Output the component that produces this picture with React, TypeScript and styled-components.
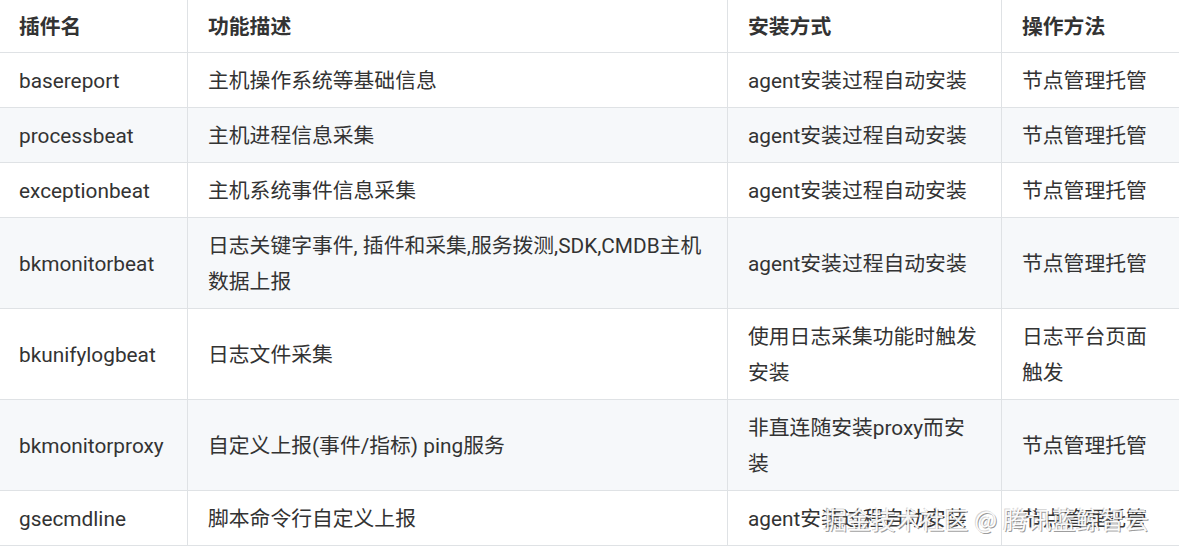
import React from "react";
import styled, { createGlobalStyle } from "styled-components";

const Global = createGlobalStyle`
  html, body { margin: 0; padding: 0; background: #ffffff; }
  body {
    width: 1179px;
    height: 546px;
    overflow: hidden;
    font-family: Roboto, "Noto Sans CJK SC", sans-serif;
    color: #333333;
  }
`;

const Page = styled.div`
  position: relative;
  width: 1179px;
  height: 546px;
  overflow: hidden;
`;

const Table = styled.div`
  display: flex;
  flex-direction: column;
  width: 1182px;
`;

const Row = styled.div<{ $striped?: boolean; $header?: boolean }>`
  display: grid;
  grid-template-columns: 187px 540px 274px 181px;
  border-bottom: 1px solid #dfe2e5;
  background: ${(p) => (p.$striped ? "#f6f8fa" : "#ffffff")};
  font-weight: ${(p) => (p.$header ? 700 : 400)};
`;

const Cell = styled.div<{ $first?: boolean; $header?: boolean }>`
  display: flex;
  align-items: center;
  box-sizing: border-box;
  padding: ${(p) => (p.$header ? "9px 20px 7px" : "10px 20px 8px")};
  padding-left: ${(p) => (p.$first ? "19px" : "20px")};
  border-left: ${(p) => (p.$first ? "none" : "1px solid #dfe2e5")};
  font-size: 20.8px;
  line-height: 36px;
`;

const Watermark = styled.div`
  position: absolute;
  left: 823px;
  top: 502px;
  font-family: "Noto Sans CJK SC", sans-serif;
  font-size: 24px;
  line-height: 34px;
  color: rgba(255, 255, 255, 0.96);
  text-shadow: 1px 1px 0 rgba(90, 90, 90, 0.6), -1px -1px 0 rgba(140, 140, 140, 0.35);
  white-space: nowrap;
  letter-spacing: 0.3px;
`;

const header = ["插件名", "功能描述", "安装方式", "操作方法"];

const rows: string[][] = [
  ["basereport", "主机操作系统等基础信息", "agent安装过程自动安装", "节点管理托管"],
  ["processbeat", "主机进程信息采集", "agent安装过程自动安装", "节点管理托管"],
  ["exceptionbeat", "主机系统事件信息采集", "agent安装过程自动安装", "节点管理托管"],
  ["bkmonitorbeat", "日志关键字事件, 插件和采集,服务拨测,SDK,CMDB主机数据上报", "agent安装过程自动安装", "节点管理托管"],
  ["bkunifylogbeat", "日志文件采集", "使用日志采集功能时触发安装", "日志平台页面触发"],
  ["bkmonitorproxy", "自定义上报(事件/指标) ping服务", "非直连随安装proxy而安装", "节点管理托管"],
  ["gsecmdline", "脚本命令行自定义上报", "agent安装过程自动安装", "节点管理托管"],
];

export default function App() {
  return (
    <Page>
      <Global />
      <Table>
        <Row $header>
          {header.map((h, i) => (
            <Cell key={h} $first={i === 0} $header>
              {h}
            </Cell>
          ))}
        </Row>
        {rows.map((r, ri) => (
          <Row key={r[0]} $striped={ri % 2 === 1}>
            {r.map((c, ci) => (
              <Cell key={ci} $first={ci === 0}>
                {c}
              </Cell>
            ))}
          </Row>
        ))}
      </Table>
      <Watermark>掘金技术社区 @ 腾讯蓝鲸智云</Watermark>
    </Page>
  );
}
